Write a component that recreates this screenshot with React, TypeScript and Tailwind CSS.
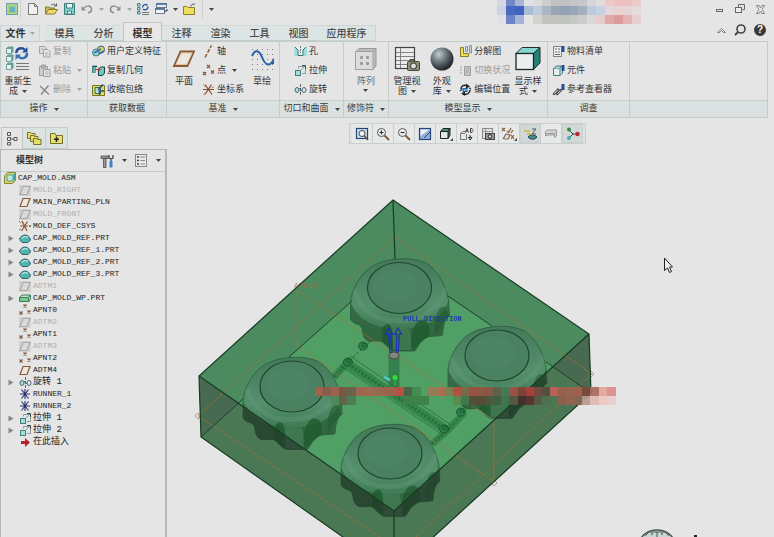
import React from "react";

type IconProps = { w?: number; h?: number; children: React.ReactNode };

function Ico({ w = 13, h = 13, children }: IconProps) {
  return (
    <svg width={w} height={h} viewBox={`0 0 ${w} ${h}`} fill="none" className="shrink-0" aria-hidden="true">
      {children}
    </svg>
  );
}

function Caret({ dim = false }: { dim?: boolean }) {
  return (
    <svg width="5" height="3" viewBox="0 0 5 3" className="shrink-0" aria-hidden="true">
      <path d="M0 0H5L2.5 3Z" fill={dim ? "#a5a5a5" : "#444"} />
    </svg>
  );
}

/* ---------- icons ---------- */

const AppIcon = () => (
  <Ico w={12} h={12}>
    <rect x=".5" y=".5" width="11" height="11" fill="#a9d3a0" stroke="#6aa3a8" />
    <rect x="2.5" y="2.5" width="7" height="7" fill="#8fcf9a" stroke="#b9c66a" />
    <rect x="4" y="4" width="5" height="5" fill="#62b4c4" />
  </Ico>
);
const AsmIcon = () => (
  <Ico w={12} h={12}>
    <path d="M.5 3.5L3.5 .5H11.5V8.5L8.5 11.5H.5Z" fill="#dcd65c" stroke="#8a8436" />
    <path d="M3 3H9V9H3Z" fill="#bfe6e2" stroke="#4a9c9a" />
    <path d="M9 3L11 1V8L9 9Z" fill="#4fa8a2" />
  </Ico>
);
const NewIcon = () => (
  <Ico w={10} h={12}>
    <path d="M.5 .5H6.5L9.5 3.5V11.5H.5Z" fill="#f0f0f0" stroke="#777" />
    <path d="M6.5 .5V3.5H9.5" stroke="#777" />
  </Ico>
);
const OpenIcon = () => (
  <Ico w={13} h={12}>
    <path d="M.5 11V4H4L5 5H9.5V7" fill="#c9b84a" stroke="#8a7a2a" />
    <path d="M.5 11L3.5 6.5H12.5L9.5 11Z" fill="#ecdc6c" stroke="#8a7a2a" />
    <path d="M6 2.5C8 .5 10 1 11 2.5M11.5 .5V3H9" stroke="#555" />
  </Ico>
);
const SaveIcon = () => (
  <Ico w={11} h={12}>
    <path d="M.5 .5H10.5V11.5H.5Z" fill="#7fcfcb" stroke="#3c7f80" />
    <path d="M2.5 .5H8.5V5H2.5Z" fill="#eef3f3" stroke="#3c7f80" />
    <path d="M3.5 8H7.5V11H3.5Z" fill="#eef3f3" stroke="#3c7f80" />
  </Ico>
);
const UndoIcon = ({ flip = false }: { flip?: boolean }) => (
  <Ico w={12} h={10}>
    <g transform={flip ? "matrix(-1 0 0 1 12 0)" : undefined}>
      <path d="M2 5C4 1.5 9.5 1 10.5 4.5C11 7 9 8.5 7 9" stroke="#8a8f94" strokeWidth="1.5" />
      <path d="M.5 2V6.5H5Z" fill="#8a8f94" />
    </g>
  </Ico>
);
const RegenIcon = () => (
  <Ico w={12} h={12}>
    <path d="M.5 .5H3V3H.5ZM.5 4.5H3V7H.5ZM.5 8.5H3V11H.5Z" fill="#bfe3df" stroke="#4a7f80" />
    <path d="M5.5 4.5C5.5 1.5 9 .5 10.5 2.5M11 3.5C11 7 7.5 7.5 6 6" stroke="#2f5fa8" strokeWidth="1.5" />
    <path d="M5 9.5H12M5 11.5H12" stroke="#777" />
  </Ico>
);
const WindowsIcon = () => (
  <Ico w={13} h={12}>
    <rect x="1.5" y=".5" width="10" height="4" fill="#e6e9f0" stroke="#6d7b92" />
    <rect x=".5" y="5.5" width="9" height="5" fill="#f0f2f6" stroke="#6d7b92" />
    <path d="M.5 6H9.5M1.5 1H11.5" stroke="#4a6c9c" strokeWidth="1.5" />
    <path d="M9 8H12V6" stroke="#333" />
  </Ico>
);
const FolderXIcon = () => (
  <Ico w={13} h={12}>
    <path d="M.5 11.5V3.5H4L5 4.5H11.5V11.5Z" fill="#ecdf62" stroke="#8d7f25" />
    <path d="M8 3.5C8 1.5 9 1 12 1" stroke="#555" />
  </Ico>
);

const BigRegen = () => (
  <Ico w={26} h={26}>
    {[1, 9, 17].map((y) => (
      <g key={y}>
        <path d={`M1.5 ${y + 1.5}L3 ${y}H8V${y + 5}L6.5 ${y + 6.5}`} fill="#54b3aa" stroke="#5f8f8c" strokeWidth=".8" />
        <path d={`M1.5 ${y + 1.5}H6.5V${y + 6.5}H1.5Z`} fill="#e6f2f0" stroke="#6f9f9c" />
      </g>
    ))}
    <path d="M11.5 7C11 2.5 17 .5 20 4" stroke="#284f94" strokeWidth="2.5" />
    <path d="M17 6.5H22.5V1Z" fill="#284f94" />
    <path d="M22 7C22.5 12 16.5 14 13.5 10.5" stroke="#3d70b8" strokeWidth="2.5" />
    <path d="M16 8.5H10.5V14Z" fill="#3d70b8" />
    <path d="M11 17.5H24M11 20.5H24M11 23.5H24" stroke="#777" />
  </Ico>
);
const CopyIcon = () => (
  <Ico>
    <path d="M1.5 1.5H6.5L8 3V8.5H1.5Z" fill="#ddd" stroke="#a3a3a3" />
    <path d="M5.5 4.5H10L12 6.5V12H5.5Z" fill="#e6e6e6" stroke="#a3a3a3" />
    <path d="M7 8H10.5M7 10H10.5M3 4H5" stroke="#b0b0b0" />
  </Ico>
);
const PasteIcon = () => (
  <Ico>
    <path d="M1.5 2.5H9.5V11.5H1.5Z" fill="#cfcfcf" stroke="#9d9d9d" />
    <path d="M3.5 1H7.5V4H3.5Z" fill="#b5b5b5" stroke="#9d9d9d" />
    <path d="M5.5 5.5H12V12.5H5.5Z" fill="#e6e6e6" stroke="#9d9d9d" />
    <path d="M7 8H10.5M7 10H10.5" stroke="#b0b0b0" />
  </Ico>
);
const DeleteIcon = () => (
  <Ico>
    <path d="M2 3L11 11.5M10.5 2.5L3 11.5" stroke="#8a8a8a" strokeWidth="1.5" />
  </Ico>
);
const UdfIcon = () => (
  <Ico>
    <circle cx="4" cy="7.5" r="3.5" fill="#9ed2d6" stroke="#3d7f86" />
    <circle cx="9" cy="4.5" r="3.5" fill="#e4d24c" stroke="#2d5f9c" />
    <path d="M2 8L9 4M7 9L12 6" stroke="#2f6fae" strokeWidth="1.5" />
  </Ico>
);
const CopyGeomIcon = () => (
  <Ico>
    <path d="M1 9V2.5H5" stroke="#1d4c4c" strokeWidth="1.5" />
    <path d="M1 3H4V9H1Z" fill="#54b8ae" />
    <path d="M6.5 5.5L8.5 3H12.5V9L10.5 11.5H6.5Z" fill="#6cc9bd" stroke="#1d3c4c" />
    <path d="M3 5.5H8M6 3.5L8 5.5L6 7.5" stroke="#a33" />
  </Ico>
);
const ShrinkIcon = () => (
  <Ico>
    <path d="M.5 2.5H12.5V12.5H.5Z" fill="#e3da55" stroke="#7c7320" />
    <path d="M3 4.5H8.5V10.5H3Z" fill="#bfe3c0" stroke="#24735a" />
    <path d="M6 7L11 1.5M7.5 12V8H12" stroke="#244c8c" strokeWidth="1.5" />
  </Ico>
);
const BigPlane = () => (
  <Ico w={26} h={26}>
    <path d="M9.5 5.5H23L16.5 20H3Z" stroke="#8a5a34" strokeWidth="1.8" />
    <path d="M10.5 7H21L15.5 18.5H5Z" fill="#ece8e0" stroke="#d3b48c" strokeWidth=".6" />
  </Ico>
);
const AxisIcon = () => (
  <Ico>
    <path d="M3 12.5L9.5 .5" stroke="#8a5a34" strokeWidth="1.5" strokeDasharray="4 1.5" />
  </Ico>
);
const PointsIcon = () => (
  <Ico>
    <path d="M5 1L8 4M8 1L5 4M1 8L4 11M4 8L1 11M9 6.5L12 9.5M12 6.5L9 9.5" stroke="#7a5238" strokeWidth="1.2" />
  </Ico>
);
const CsysIcon = () => (
  <Ico>
    <path d="M1 6.5H12M3 1.5L10 11.5M9.5 1.5L3 11.5" stroke="#8a4c28" strokeWidth="1.2" />
    <path d="M1 1.5L4 4M1 11.5L4 10M12 4L9 5" stroke="#b07850" strokeWidth=".8" />
  </Ico>
);
const BigSketch = () => (
  <Ico w={26} h={26}>
    {[3, 8, 13, 18, 23].map((y) =>
      [3, 8, 13, 18, 23].map((x) => <rect key={`${x}-${y}`} x={x} y={y} width="1" height="1" fill="#6f7f90" />),
    )}
    <path d="M3 10C6 3 10 4 13 11C16 19 20 21 24 15V18" stroke="#2a62ae" strokeWidth="2" />
  </Ico>
);
const HoleIcon = () => (
  <Ico>
    <path d="M0 2H13V11H0Z" fill="#a7dcd8" />
    <path d="M1 2L4 5V10.5H9V5L12 2" stroke="#387a7c" fill="#e7efee" />
    <path d="M6.5 1V8" stroke="#777" strokeDasharray="2 1" />
  </Ico>
);
const ExtrudeIcon = () => (
  <Ico>
    <rect x="1.5" y="6.5" width="5" height="5" fill="#a7dcd8" stroke="#3f7f7c" />
    <path d="M4.5 4.5V2.5H11.5V9.5H8M6.5 6.5L11 2" stroke="#8a9a9a" />
    <path d="M8 1.5H11.5V5" stroke="#364c4c" />
  </Ico>
);
const RevolveIcon = () => (
  <Ico>
    <path d="M6.5 1V12.5" stroke="#666" strokeDasharray="3 1" />
    <ellipse cx="3" cy="7" rx="2" ry="2.5" stroke="#3f6c78" fill="#b5dcd9" />
    <ellipse cx="10" cy="7" rx="2" ry="2.5" stroke="#3f6c78" />
    <path d="M5 5L8 8" stroke="#3f6c78" />
  </Ico>
);
const BigPattern = () => (
  <Ico w={26} h={26}>
    <path d="M3 6L6 2.5H23V20L20 23.5" fill="#bcbcbc" stroke="#9a9a9a" />
    <rect x="2.5" y="5.5" width="17.5" height="18" fill="#dcdcdc" stroke="#a0a0a0" />
    <path d="M20 5.5L23 2.5" stroke="#999" />
    {[[8, 11], [14, 11], [8, 17], [14, 17]].map(([x, y]) => (
      <rect key={`${x}-${y}`} x={x - 1} y={y - 1} width="3" height="3" rx="1" fill="#9a9a9a" />
    ))}
  </Ico>
);
const BigViewMgr = () => (
  <Ico w={26} h={26}>
    <rect x="1.5" y="1.5" width="19" height="21" fill="#ececec" stroke="#444" strokeWidth="1.2" />
    <path d="M2 6.5H20M2 10.5H20M2 14.5H20M2 18.5H20M6.5 2V22" stroke="#777" strokeWidth=".9" />
    <rect x="13.5" y="15.5" width="12" height="9" rx="1" fill="#8d8f74" stroke="#444" />
    <circle cx="19.5" cy="20" r="3" fill="#ddd" stroke="#333" />
    <path d="M16 15.5V13.5H20V15.5" fill="#77785f" stroke="#444" />
  </Ico>
);
const BigSphere = () => (
  <Ico w={26} h={26}>
    <defs>
      <radialGradient id="ball" cx=".36" cy=".3" r=".75">
        <stop offset="0" stopColor="#c3cdd3" />
        <stop offset=".35" stopColor="#7c878e" />
        <stop offset=".8" stopColor="#33393e" />
        <stop offset="1" stopColor="#1c2023" />
      </radialGradient>
    </defs>
    <circle cx="13" cy="13" r="11.5" fill="url(#ball)" />
  </Ico>
);
const ExplodeIcon = () => (
  <Ico>
    <path d="M1.5 2.5H4.5V8.5H9.5V11.5H1.5Z" fill="#ecdc5a" stroke="#8d7d22" />
    <path d="M6.5 1.5H8.5V6.5H6.5ZM10.5 .5H12.5V8H10.5Z" fill="#c7d7e0" stroke="#7a97aa" />
  </Ico>
);
const SwitchStateIcon = () => (
  <Ico>
    <path d="M5.5 2.5H11.5V11.5H5.5Z" fill="#c4c4c4" stroke="#a0a0a0" />
    <path d="M1 3H3M1 6H3M1 9H3M7 5H10M7 8H10" stroke="#a0a0a0" strokeWidth="1.2" />
  </Ico>
);
const EditPosIcon = () => (
  <Ico>
    <path d="M2 6C2 3 5 1 8 3M11 7C11 10 8 12 5 11" stroke="#222" strokeWidth="1.5" />
    <path d="M7 .5L11 3.5L7 5.5ZM6 8.5L2 10.5L6 13Z" fill="#222" />
    <rect x="4" y="5.5" width="4" height="3" fill="#6fb0dc" stroke="#2c5a88" />
    <path d="M1 8L3 6M10 5L12 6" stroke="#2c5a88" strokeWidth="1.5" />
  </Ico>
);
const BigCube = () => (
  <Ico w={26} h={26}>
    <path d="M1 7.5L7 1.5H25L18.5 7.5Z" fill="#86d6cd" stroke="#1d2f30" />
    <path d="M18.5 7.5L25 1.5V17L18.5 23.5Z" fill="#258078" stroke="#1d2f30" />
    <rect x="1" y="7.5" width="17.5" height="16" fill="#e9eeee" stroke="#1d2424" strokeWidth="1.3" />
  </Ico>
);
const BomIcon = () => (
  <Ico>
    <rect x="1.5" y="1.5" width="8" height="10" fill="#eee" stroke="#7c8790" />
    <path d="M3 4H5M6 4H8M3 7H5M6 7H8M3 9.5H8" stroke="#667" />
    <path d="M9.5 1H12.5V7H9.5Z" fill="#234f94" />
  </Ico>
);
const CompIcon = () => (
  <Ico>
    <path d="M1.5 4.5H8V11.5H1.5Z" fill="#e6efef" stroke="#3e7f86" />
    <path d="M1.5 4.5L4 2H9L8 4.5M8 11.5L10.5 9V6" fill="#b6dad8" stroke="#3e7f86" />
    <path d="M9.5 1H12.5V7H9.5Z" fill="#234f94" />
  </Ico>
);
const RefViewIcon = () => (
  <Ico>
    <path d="M2 11L6 6.5M5 11L9 7" stroke="#555" strokeWidth="2.5" strokeLinecap="round" />
    <path d="M2.5 10.5L5.5 7M5.5 10.5L8.5 7.5" stroke="#d6d6d6" />
    <path d="M9.5 1H12.5V7H9.5Z" fill="#234f94" />
  </Ico>
);

/* ---------- model tree icons ---------- */

const TPlane = ({ dim = false }: { dim?: boolean }) => (
  <Ico w={12} h={11}>
    {dim && <rect width="12" height="11" fill="#d2d2d0" />}
    <path d="M4 1.5H11L8 9.5H1Z" fill={dim ? "#dadad8" : "#ebe6de"} stroke={dim ? "#aaaaa6" : "#855a36"} strokeWidth="1.2" />
  </Ico>
);
const TCsys = () => (
  <Ico w={12} h={12}>
    <path d="M1 6H9M3 1L8 11M8.5 1.5L2.5 11" stroke="#8a5434" strokeWidth="1.2" />
    <path d="M10 5L12 7M12 5L10 7M0 1L2 3M0 10L2 9" stroke="#8a5434" strokeWidth=".8" />
  </Ico>
);
const TPart = () => (
  <Ico w={12} h={11}>
    <path d="M.5 6.500C1 4 3 2.5 6 2C9 2 11 4.5 11.5 7L9 9.5H3Z" fill="#53b3ae" stroke="#2f6668" />
    <path d="M3 5.5C4 3.5 7 3 9 4.5" stroke="#b4e4e0" strokeWidth="1.2" />
  </Ico>
);
const TWork = () => (
  <Ico w={12} h={11}>
    <path d="M.5 4.5L3 2H11.5L9.5 4.5ZM9.5 4.5L11.5 2V6L9.5 9Z" fill="#c0e6ca" stroke="#3f7f54" />
    <path d="M.5 4.5H9.5V8.500H.5Z" fill="#7cc894" stroke="#3f7f54" />
  </Ico>
);
const TPoint = () => (
  <Ico w={12} h={12}>
    <path d="M4.5 .5L7.5 3.5M7.5 .5L4.5 3.5M.5 7.5L3.5 10.5M3.5 7.5L.5 10.5M8.5 6.5L11.5 9.5M11.5 6.5L8.5 9.5" stroke="#84563a" strokeWidth="1.2" />
  </Ico>
);
const TRunner = () => (
  <Ico w={12} h={12}>
    <path d="M1 6H11M6 1V11M2.5 1.5L9.5 10.5M9.5 1.5L2.5 10.5" stroke="#2b3170" strokeWidth="1.1" />
  </Ico>
);
const TInsert = () => (
  <Ico w={12} h={11}>
    <path d="M2 4H6V1L11 5.5L6 10V7H2Z" fill="#b3242a" />
  </Ico>
);

type Node = { label: string; icon: React.ReactNode; dim?: boolean; exp?: boolean };
const NODES: Node[] = [
  { label: "MOLD_RIGHT", icon: <TPlane dim />, dim: true },
  { label: "MAIN_PARTING_PLN", icon: <TPlane /> },
  { label: "MOLD_FRONT", icon: <TPlane dim />, dim: true },
  { label: "MOLD_DEF_CSYS", icon: <TCsys /> },
  { label: "CAP_MOLD_REF.PRT", icon: <TPart />, exp: true },
  { label: "CAP_MOLD_REF_1.PRT", icon: <TPart />, exp: true },
  { label: "CAP_MOLD_REF_2.PRT", icon: <TPart />, exp: true },
  { label: "CAP_MOLD_REF_3.PRT", icon: <TPart />, exp: true },
  { label: "ADTM1", icon: <TPlane dim />, dim: true },
  { label: "CAP_MOLD_WP.PRT", icon: <TWork />, exp: true },
  { label: "APNT0", icon: <TPoint /> },
  { label: "ADTM2", icon: <TPlane dim />, dim: true },
  { label: "APNT1", icon: <TPoint /> },
  { label: "ADTM3", icon: <TPlane dim />, dim: true },
  { label: "APNT2", icon: <TPoint /> },
  { label: "ADTM4", icon: <TPlane /> },
  { label: "旋转 1", icon: <RevolveIcon />, exp: true },
  { label: "RUNNER_1", icon: <TRunner /> },
  { label: "RUNNER_2", icon: <TRunner /> },
  { label: "拉伸 1", icon: <ExtrudeIcon />, exp: true },
  { label: "拉伸 2", icon: <ExtrudeIcon />, exp: true },
  { label: "在此插入", icon: <TInsert /> },
];

/* ---------- ribbon parts ---------- */

function Big({ icon, lines, caret = false, dim = false }: { icon: React.ReactNode; lines: string[]; caret?: boolean; dim?: boolean }) {
  const last = lines.length - 1;
  return (
    <button type="button" className={`flex w-[34px] shrink-0 flex-col items-center pt-1 leading-[10px] ${dim ? "text-[#6c6c6c]" : "text-[#333]"}`}>
      {icon}
      <span className="mt-1 flex flex-col items-center whitespace-nowrap">
        {lines.map((l, i) => (
          <span key={l} className="flex items-center gap-1">
            {l}
            {caret && i === last && last > 0 && <Caret />}
          </span>
        ))}
        {caret && last === 0 && <span className="flex h-[9px] items-center"><Caret /></span>}
      </span>
    </button>
  );
}

function Small({ icon, label, caret = false, dim = false }: { icon: React.ReactNode; label: string; caret?: boolean; dim?: boolean }) {
  return (
    <button type="button" disabled={dim} className={`flex h-[19px] items-center gap-[2px] whitespace-nowrap ${dim ? "text-[#9c9c9c]" : "text-[#333]"}`}>
      {icon}
      {label}
      {caret && <span className="pl-1"><Caret dim={dim} /></span>}
    </button>
  );
}

function Group({ label, caret = false, className, children }: { label: string; caret?: boolean; className: string; children?: React.ReactNode }) {
  return (
    <section className={`flex flex-col border-r border-[#c8cece] ${className}`}>
      <div className="flex h-[58px]">{children}</div>
      <div className="flex h-[17px] items-center justify-center gap-[6px] whitespace-nowrap border-t border-[#c6cfcf] bg-[#dbe1e0] text-[#3a3a3a]">
        {label}
        {caret && <Caret />}
      </div>
    </section>
  );
}

const Col = ({ className = "", children }: { className?: string; children: React.ReactNode }) => (
  <div className={`flex flex-col items-start ${className}`}>{children}</div>
);

/* ---------- view toolbar ---------- */

const Lens = ({ sign }: { sign: string }) => (
  <Ico w={14} h={14}>
    <circle cx="5.5" cy="5.5" r="4" fill="#f0f2f2" stroke="#555" />
    <path d={sign} stroke="#333" strokeWidth="1.2" />
    <path d="M8.5 8.5L13 13" stroke="#7b5b3a" strokeWidth="2" />
  </Ico>
);
const VIEW_TOOLS: { name: string; on?: boolean; icon: React.ReactNode }[] = [
  { name: "重新调整", icon: <Ico w={14} h={14}><rect x="1.5" y="1.5" width="11" height="10" fill="#cfdcee" stroke="#24457c" strokeWidth="1.2" /><circle cx="7" cy="6.5" r="3" fill="#f2f4f6" stroke="#444" /><path d="M9 8.5L13 13" stroke="#6b4e34" strokeWidth="1.6" /></Ico> },
  { name: "放大", icon: <Lens sign="M3.5 5.5H7.5M5.5 3.5V7.5" /> },
  { name: "缩小", icon: <Lens sign="M3.5 5.5H7.5" /> },
  { name: "重画", icon: <Ico w={14} h={14}><rect x="1.5" y="1.5" width="11" height="11" fill="#8fb0da" stroke="#24457c" strokeWidth="1.2" /><path d="M2.5 2.500H11.5L2.5 9Z" fill="#eef2f6" /><path d="M6 11L12 5" stroke="#444" /></Ico> },
  { name: "显示样式", icon: <Ico w={14} h={14}><path d="M1.5 4.5L4 1.5H11L9 4.5ZM9 4.5L11 1.5V8.5L9 11.5Z" fill="#3f8f78" stroke="#222" /><path d="M1.5 4.5H9V11.5H1.5Z" fill="#dfeae6" stroke="#222" /><path d="M14 11V14H11Z" fill="#444" /></Ico> },
  { name: "已命名视图", icon: <Ico w={16} h={14}><path d="M1.5 6.5L3.5 4.5H7M1.5 6.5V12.5H7.5V7M1.5 6.5H6" stroke="#777" /><path d="M6.5 5.5L8 1.5L9.5 5.5M7 4H9M11.5 1.5H13L14 2.5L13 3.5L14 4.5L13 5.5H11.5Z" stroke="#333" strokeWidth=".9" /><path d="M11 8V10H12M9.5 10.5H13L11.2 13Z" stroke="#333" /></Ico> },
  { name: "视图管理器", icon: <Ico w={14} h={14}><rect x="1.5" y="1.5" width="10" height="10" fill="#e3e3e3" stroke="#888" /><path d="M2 4.5H11M4.5 2V11M5 7H11" stroke="#999" /><rect x="4.5" y="6.5" width="9" height="6" fill="#999" stroke="#444" /><circle cx="9" cy="9.5" r="1.8" fill="#ddd" stroke="#222" /></Ico> },
  { name: "基准显示过滤器", icon: <Ico w={16} h={14}><path d="M1 1L4 4M4 1L1 4M10 1L8 5M12 3L10 6M2 12L5 7M5 7L9 8L7 12H3M10 8L13 12M13 8L10 12M6 4L8 6" stroke="#86603e" strokeWidth="1.2" /><path d="M16 11V14H13Z" fill="#444" /></Ico> },
  { name: "注释显示", on: true, icon: <Ico w={14} h={14}><path d="M0 4H6M3 7H7" stroke="#c5b92a" strokeWidth="1.5" /><path d="M8 2H12L8 7H12" stroke="#555" /><path d="M4 10C6 7.5 11 7.5 13 10C11 13 6 13 4 10Z" fill="#4b8a8a" stroke="#244c54" /></Ico> },
  { name: "旋转中心", icon: <Ico w={14} h={14}><path d="M1.5 4.5L3.5 3H12.5V9L10.5 10.5V6.5H1.5ZM1.5 4.5V9L4 8H10" fill="#d3d3d3" stroke="#999" /></Ico> },
  { name: "动画", on: true, icon: <Ico w={14} h={14}><path d="M3 3L7 7H11M7 7L3 11" stroke="#444" /><circle cx="3" cy="2.5" r="2" fill="#2e8a3a" /><circle cx="3" cy="11" r="2" fill="#4aaeb4" /><circle cx="11.5" cy="7" r="2.2" fill="#b42c34" /></Ico> },
];

/* ---------- 3D scene ---------- */

const CAP_BODY =
  "M-49 14C-48 2 -40 -12 -30 -20C-14 -31 14 -32 28 -24C38 -17 46 -4 49 12L50 28C47 29 44 33 43 47C38 49 31 47 26 50C20 53 19 59 15 63H-6C-12 60 -13 57 -17 54C-22 51 -30 56 -34 51C-38 47 -36 41 -39 38C-42 35 -46 37 -49 31Z";
const CAP_SKIRT =
  "M-49 14C-42 32 -24 41 0 41C24 41 44 32 49 12L50 28C47 29 44 33 43 47C38 49 31 47 26 50C20 53 19 59 15 63H-6C-12 60 -13 57 -17 54C-22 51 -30 56 -34 51C-38 47 -36 41 -39 38C-42 35 -46 37 -49 31Z";

function Cap({ x, y }: { x: number; y: number }) {
  return (
    <g transform={`translate(${x} ${y})`}>
      <path d={CAP_BODY} fill="url(#capBody)" stroke="#285239" strokeWidth=".7" />
      <path d={CAP_SKIRT} fill="#2c6038" opacity=".7" />
      <path d="M-12 41L-8 62H13L10 41Z" fill="#4a8560" opacity=".55" />
      <path d="M-17 54C-20 42 -16 35 -11 36C-6 38 -7 50 -6 62Z" fill="#1f5a2e" opacity=".8" />
      <path d="M12 62C10 46 15 33 22 32C30 32 32 42 28 49Z" fill="#1f5a2e" opacity=".8" />
      <path d="M36 46C34 28 40 16 46 19L49 28Z" fill="#1f5a2e" opacity=".6" />
      <path d="M-45 2C-38 27 -18 34 2 33C24 32 41 20 46 0" stroke="#6a9f80" strokeWidth="5" opacity=".3" fill="none" />
      <ellipse rx="32" ry="25.5" fill="#4a8161" stroke="#204630" strokeWidth="1.2" />
      <ellipse cx="-4" cy="-3" rx="22" ry="16" fill="#50856a" opacity=".6" />
    </g>
  );
}

const RED_1 = ["#a8604a", "#8f5a48", "#a4604c", "#7a5446", "#69604a", "#a2624c", "#a8634c", "#a06850", "#a2644e", "#a65f4e", "#c14c40", "#4a5f40", "#3f8a50", "", "#9a7a56", "#b46a4e", "#7e7f52", "#bb5040", "#7e6a4c", "#a3503f", "#93553f", "#8f5444", "#5f6048", "#417a56", "#a34f44", "#80423a", "#b0403a", "#7c4a40", "#54503e", "#c46058", "#a0604c", "#9c6450", "#a8604c", "#7c4a3c", "#a96a5e", "#e4a49c", "#dc8c88"];
const RED_2 = ["", "", "#4c8a5a", "#63604a", "#4c7a52", "", "", "", "", "", "", "#3f7f4c", "#3c8048", "#3f8048", "", "", "", "#5a8a50", "#3f7a4c", "#564f38", "#5c4a38", "#4c5a3c", "#41603f", "#3f7650", "#5a5a44", "#4a2f2a", "#5a3530", "#5c5a44", "#4c7450", "#4c7852", "#90604c", "#9a6250", "#8a6650", "#b79a90", "#e0b8b4", "#ecc8c4", "#eccccc"];

function Scene() {
  return (
    <svg viewBox="167 144 607 393" className="block h-full w-full" role="img" aria-label="CAP_MOLD">
      <defs>
        <linearGradient id="capBody" x1="0" y1="0" x2="0" y2="1">
          <stop offset="0" stopColor="#437a59" />
          <stop offset=".5" stopColor="#55906d" />
          <stop offset=".75" stopColor="#3f7b56" />
          <stop offset="1" stopColor="#326a42" />
        </linearGradient>
      </defs>
      <path d="M393 200L589 334L591 393L394 573L201 437L199 376Z" fill="#4b8b5f" />
      <path d="M395 262L553 367L394 511L239 403Z" fill="#50a066" />
      <path d="M239 403L394 511L553 367L591 393L394 573L201 437Z" fill="#4a7754" />
      <path d="M199 376L239 403L201 437ZM589 334L553 367L591 393Z" fill="#486a52" />

      <g stroke="#2f8046" strokeWidth="9" opacity=".8">
        <path d="M345 362L448 431" />
        <path d="M334 377L349 361M432 444L449 429L464 413" strokeWidth="7" />
        <path d="M394 356V388" stroke="#2f7a48" strokeWidth="11" />
      </g>
      <path d="M345 362L448 431M334 377L349 361M432 444L449 429" stroke="#1e6432" strokeWidth="3" strokeDasharray="2 2" opacity=".7" />
      <path d="M349 361L376 336M449 429L466 410" stroke="#1e5c30" strokeDasharray="3 2" />
      <path d="M341 366L440 433M350 356L451 425" stroke="#1e6432" strokeWidth=".7" />
      {[[348, 362], [363, 346], [444, 429], [461, 412]].map(([x, y]) => (
        <g key={x} stroke="#174f29" strokeWidth=".8" fill="#2f8046">
          <ellipse cx={x} cy={y} rx="4.5" ry="4" />
          <ellipse cx={x + 1} cy={y - 1} rx="2" ry="2" />
        </g>
      ))}

      <Cap x={399.5} y={288} />
      <Cap x={497} y={355.5} />
      <Cap x={292} y={386.5} />
      <Cap x={390} y={453.5} />

      <clipPath id="frontWall">
        <path d="M199 376L394 511L589 334L591 393L394 573L201 437Z" />
      </clipPath>
      <g clipPath="url(#frontWall)" fill="#26352a" opacity=".6">
        <path d={CAP_BODY} transform="translate(292 386.5)" />
        <path d={CAP_BODY} transform="translate(390 453.5)" />
        <path d={CAP_BODY} transform="translate(497 355.5)" />
      </g>

      <g stroke="#a8703c" strokeWidth="1" opacity=".65" fill="none">
        <path d="M395 237L592 374L416 537M395 237L198 416L380 537" />
        <path d="M297 290V346L494 482V420L297 290" />
        <path d="M591 371L594 374L591 377L588 374ZM198 413L201 416L198 419L195 416ZM494 480L497 483L494 486L491 483Z" />
      </g>
      <text x="294" y="288" fontSize="8" fill="#b06a3c" fontFamily="Liberation Mono, monospace" opacity=".8">APNT2</text>

      <g stroke="#173c22" strokeWidth="1.2" fill="none">
        <path d="M393 200L589 334L591 393L394 573L201 437L199 376Z" />
        <path d="M199 376L394 511L589 334M394 511V537M393 200L395 259" />
        <path d="M352 301L289 357M243 399L201 437M448 296L492 326M546 362L591 393" strokeWidth=".9" />
      </g>

      <g stroke="#1c35b4" strokeWidth="1.3" fill="none">
        <path d="M390 353L388.5 334H385.500L389 328L392.5 334H390.5L392 353M396 353L397 334H394.5L398 328L401.5 334H399.5L398 353M390 353H398" />
      </g>
      <ellipse cx="394" cy="355.5" rx="5" ry="3.5" fill="#7a8a78" stroke="#5c3a3c" />
      <path d="M384 377L390 380" stroke="#4cd0d4" strokeWidth="2" />
      <circle cx="395" cy="377.5" r="2.5" fill="#2fe02f" />
      <path d="M395 379V386" stroke="#2fbf2f" />
      <text x="403" y="321" fontSize="7" fontWeight="700" fill="#1f3ab0" fontFamily="Liberation Mono, monospace">PULL DIRECTION</text>

      <g shapeRendering="crispEdges" opacity=".92">
        {RED_1.map((c, i) => c && <rect key={`a${i}`} x={315 + Math.round(i * 8.1)} y="387" width="9" height="9" fill={c} />)}
        {RED_2.map((c, i) => c && <rect key={`b${i}`} x={315 + Math.round(i * 8.1)} y="396" width="9" height="9" fill={c} />)}
      </g>

      <path d="M664.5 258V270.5L667.5 268L669.5 272.5L671.5 271.5L669.5 267H672.5Z" fill="#f2f2f2" stroke="#222" />

      <g>
        <ellipse cx="657" cy="543" rx="17" ry="13" fill="#c9d6d3" stroke="#4a5a58" strokeWidth="1.5" />
        <path d="M645 536L649 532H665L669 536M657 532V537" stroke="#4a5a58" fill="none" />
        <path d="M651 534H653M661 534H663" stroke="#33403f" />
        <rect x="694" y="535" width="3" height="2" fill="#222" />
      </g>
    </svg>
  );
}

const TITLE_BLOCKS = [
  ["#d3d8e2", "#7088c4", "#a9b4d0", "#e0e1e3", "#dcdcdc", "#cdcdcd", "#c2c2c4", "#c0c1c3", "#c4c5c7", "#c8c8ca", "#d6d6d6", "#e0dcdc", "#ecc8c8", "#eac0c0", "#ebc0c0", "#e8cccc"],
  ["#c9d3e4", "#4a68bc", "#3f64c0", "#a9bcd8", "#c0ccdc", "#aab6c4", "#98a6b6", "#94a2b4", "#98a6b8", "#a4b0be", "#bccadc", "#c6d2e2", "#e4d6d8", "#e8d2d2", "#e6d4d4", "#e6dada"],
  ["#dfe1e6", "#6c84c4", "#a4b4d8", "#e4e4e4", "#d2d2ce", "#c2c2be", "#c2c2be", "#c0c2c0", "#c6c8c6", "#cccccc", "#d8d8d8", "#e6cccc", "#e2a8a8", "#dc9c9c", "#e4b4b4", "#e6d0d0"],
];

const TABS = ["模具", "分析", "模型", "注释", "渲染", "工具", "视图"];
const slot = "flex w-[18px] items-center justify-center";
const caretSlot = "flex w-[10px] items-center justify-center";

export default function App() {
  return (
    <div className="flex h-screen min-h-[480px] flex-col overflow-hidden bg-[#e5e5e5] font-['Liberation_Sans','Noto_Sans_CJK_SC',sans-serif] text-[9px] text-[#333]">
      <header className="relative">
        <div className="flex h-[25px] items-start justify-between pr-[9px]">
          <div className="flex h-[18px] items-stretch pl-[3px]">
            <button type="button" aria-label="应用" className={`${slot} border-r border-[#cfcfcf]`}><AppIcon /></button>
            <button type="button" aria-label="新建" className={`${slot} ml-[3px]`}><NewIcon /></button>
            <button type="button" aria-label="打开" className={slot}><OpenIcon /></button>
            <button type="button" aria-label="保存" className={slot}><SaveIcon /></button>
            <button type="button" aria-label="撤消" className={slot}><UndoIcon /></button>
            <button type="button" aria-label="撤消列表" className={caretSlot}><Caret dim /></button>
            <button type="button" aria-label="重做" className={slot}><UndoIcon flip /></button>
            <button type="button" aria-label="重做列表" className={caretSlot}><Caret dim /></button>
            <button type="button" aria-label="重新生成" className={slot}><RegenIcon /></button>
            <button type="button" aria-label="窗口" className={slot}><WindowsIcon /></button>
            <button type="button" aria-label="窗口列表" className={caretSlot}><Caret /></button>
            <button type="button" aria-label="关闭" className={slot}><FolderXIcon /></button>
            <button type="button" aria-label="自定义" className="ml-1 flex w-[18px] items-center justify-center border-l border-[#cfcfcf]"><Caret /></button>
          </div>
          <div className="flex h-[18px] items-center gap-[11px]">
            <button type="button" aria-label="最小化"><Ico w={9} h={9}><rect x="1.5" y="4.5" width="6" height="2" fill="#eee" stroke="#666" /></Ico></button>
            <button type="button" aria-label="还原"><Ico w={10} h={10}><path d="M3.5 .5H9.5V5.5H7.5M3.5 .5V3" stroke="#666" /><rect x=".5" y="3.5" width="6" height="5" fill="#eee" stroke="#666" /></Ico></button>
            <button type="button" aria-label="关闭窗口"><Ico w={9} h={9}><path d="M.5 .5H3L4.5 3L6 .5H8.5L6 4.5L8.5 8.5H6L4.5 6L3 8.5H.5L3 4.5Z" fill="#eee" stroke="#777" strokeWidth=".9" /></Ico></button>
          </div>
        </div>
        <div className="absolute right-[133px] top-0 grid h-6 grid-cols-16 grid-rows-[6px_9px_9px]" aria-hidden="true">
          {TITLE_BLOCKS.flat().map((c, i) => (
            <span key={i} className="w-[9px]" style={{ backgroundColor: c }} />
          ))}
        </div>
      </header>

      <nav className="flex h-4 items-end justify-between pr-2">
        <div className="flex h-4 text-[10px]" role="tablist">
          <button type="button" className="mr-[5px] flex w-10 items-center justify-center gap-1 border border-b-0 border-[#cdd5d5] bg-[#dfe4e4] font-bold">
            文件<Caret dim />
          </button>
          {TABS.map((t) => (
            <button
              key={t}
              type="button"
              role="tab"
              aria-selected={t === "模型"}
              className={
                t === "模型"
                  ? "-mt-[3px] w-[39px] border border-b-0 border-[#bcc4c4] bg-[#e8e8e8] pt-[3px] font-bold"
                  : "w-[39px] border-y border-b-[#c4cccc] border-t-[#d2dada] bg-[#dde4e4] font-medium text-[#4a4a4a]"
              }
            >
              {t}
            </button>
          ))}
          <button type="button" role="tab" aria-selected={false} className="w-[58px] border border-l-0 border-[#cbd3d3] bg-[#dde4e4] font-medium text-[#4a4a4a]">
            应用程序
          </button>
        </div>
        <div className="flex h-[10px] items-center gap-2 self-start">
          <button type="button" aria-label="折叠功能区"><Ico w={9} h={7}><path d="M.5 5.5L4.5 1.5L8.5 5.5H6.5L4.5 3.5L2.5 5.5Z" fill="#eee" stroke="#666" strokeWidth=".8" /></Ico></button>
          <button type="button" aria-label="搜索"><Ico w={12} h={12}><circle cx="7" cy="5" r="4" stroke="#444" strokeWidth="1.6" /><path d="M4 8L1 11" stroke="#444" strokeWidth="2" /></Ico></button>
          <button type="button" aria-label="帮助" className="flex h-3 w-3 items-center justify-center rounded-full bg-[#3a3a3a] text-[10px] font-bold leading-none text-white">?</button>
        </div>
      </nav>

      <div className="mr-[6px] flex border border-[#c3cbcb]">
        <Group label="操作" caret className="w-[87px]">
          <Big icon={<BigRegen />} lines={["重新生", "成"]} caret />
          <Col className="pl-[3px]">
            <Small icon={<CopyIcon />} label="复制" dim />
            <Small icon={<PasteIcon />} label="粘贴" caret dim />
            <Small icon={<DeleteIcon />} label="删除" caret dim />
          </Col>
        </Group>
        <Group label="获取数据" className="w-[79px]">
          <Col className="pl-1">
            <Small icon={<UdfIcon />} label="用户定义特征" />
            <Small icon={<CopyGeomIcon />} label="复制几何" />
            <Small icon={<ShrinkIcon />} label="收缩包络" />
          </Col>
        </Group>
        <Group label="基准" caret className="w-[113px]">
          <Big icon={<BigPlane />} lines={["平面"]} />
          <Col className="grow pl-px">
            <Small icon={<AxisIcon />} label="轴" />
            <Small icon={<PointsIcon />} label="点" caret />
            <Small icon={<CsysIcon />} label="坐标系" />
          </Col>
          <Big icon={<BigSketch />} lines={["草绘"]} />
        </Group>
        <Group label="切口和曲面" caret className="w-16">
          <Col className="pl-[14px]">
            <Small icon={<HoleIcon />} label="孔" />
            <Small icon={<ExtrudeIcon />} label="拉伸" />
            <Small icon={<RevolveIcon />} label="旋转" />
          </Col>
        </Group>
        <Group label="修饰符" caret className="w-[45px]">
          <div className="flex grow justify-center"><Big icon={<BigPattern />} lines={["阵列"]} caret dim /></div>
        </Group>
        <Group label="模型显示" caret className="w-[159px]">
          <div className="flex grow justify-between pl-px pr-[2px]">
            <Big icon={<BigViewMgr />} lines={["管理视", "图"]} caret />
            <Big icon={<BigSphere />} lines={["外观", "库"]} caret />
            <Col>
              <Small icon={<ExplodeIcon />} label="分解图" />
              <Small icon={<SwitchStateIcon />} label="切换状况" dim />
              <Small icon={<EditPosIcon />} label="编辑位置" />
            </Col>
            <Big icon={<BigCube />} lines={["显示样", "式"]} caret />
          </div>
        </Group>
        <Group label="调查" className="w-[82px]">
          <Col className="pl-1">
            <Small icon={<BomIcon />} label="物料清单" />
            <Small icon={<CompIcon />} label="元件" />
            <Small icon={<RefViewIcon />} label="参考查看器" />
          </Col>
        </Group>
        <div className="flex flex-1 flex-col justify-end">
          <div className="h-[17px] border-t border-[#c6cfcf] bg-[#dbe1e0]" />
        </div>
      </div>

      <main className="flex min-h-0 flex-1">
        <aside className="flex w-[167px] shrink-0 flex-col pt-[9px]">
          <div className="flex h-[22px] pl-px" role="tablist">
            <button type="button" role="tab" aria-selected aria-label="模型树" className="flex w-[22px] items-center justify-center border border-b-0 border-[#bfc7c7]">
              <Ico w={12} h={15}>
                <path d="M1.5 1.5H4.5V4.5H1.5ZM1.5 6.5H4.5V9.5H1.5ZM1.5 11.5H4.5V14H1.5ZM8 6.5H11V9.5H8Z" fill="#eee" stroke="#555" />
                <path d="M5 8H8" stroke="#555" />
              </Ico>
            </button>
            <button type="button" role="tab" aria-selected={false} aria-label="文件夹浏览器" className="flex w-[22px] items-center justify-center border-y border-[#c4cccc] bg-[#dbe2e2]">
              <Ico w={15} h={15}>
                {[0, 3, 6].map((d) => (
                  <path key={d} d={`M${d + 0.5} ${d + 7.5}V${d + 1.5}H${d + 3.5}L${d + 4.5} ${d + 2.5}H${d + 8}V${d + 7.5}Z`} fill="#e3dd6a" stroke="#77702c" />
                ))}
              </Ico>
            </button>
            <button type="button" role="tab" aria-selected={false} aria-label="收藏夹" className="flex w-[23px] items-center justify-center border border-[#c4cccc] bg-[#dbe2e2]">
              <Ico w={13} h={12}>
                <path d="M.5 11.5V1.5H5L6 3.5H12.5V11.5Z" fill="#e6e06c" stroke="#77702c" />
                <path d="M6.5 4.5V10M4 7.2H9" stroke="#222" strokeWidth="1.5" />
              </Ico>
            </button>
          </div>
          <div className="flex min-h-0 flex-1 flex-col border-l border-r-2 border-t border-[#b4b8b8]">
            <div className="flex h-[22px] shrink-0 items-center border-b border-[#c2caca] pl-[15px] pr-1">
              <h2 className="grow text-[9px] font-bold">模型树</h2>
              <button type="button" aria-label="设置" className="flex items-center gap-2">
                <Ico w={14} h={14}>
                  <path d="M1 2H8V4.5H1ZM3.5 4.5H6V13.5H3.5Z" fill="#8f9a9c" stroke="#4c4c4c" strokeWidth=".8" />
                  <path d="M9 1V4L11 5L13 4V1M11 5V8" stroke="#444" strokeWidth="1.3" />
                  <path d="M9.5 7H12.5V13.5H9.5Z" fill="#3f84c8" />
                </Ico>
                <Caret />
              </button>
              <button type="button" aria-label="显示" className="ml-2 flex items-center gap-2">
                <Ico w={13} h={13}>
                  <rect x=".5" y=".5" width="11" height="12" fill="#e9e9e9" stroke="#888" />
                  <path d="M2 3H4M2 6.5H4M2 10H4" stroke="#444" strokeWidth="1.5" />
                  <path d="M5.5 3H10M5.5 6.5H10M5.5 10H10" stroke="#888" />
                </Ico>
                <Caret />
              </button>
            </div>
            <ul className="font-['Liberation_Mono','Noto_Sans_CJK_SC',monospace] text-[8px] leading-3 text-[#222]">
              <li className="flex h-3 items-center gap-[2px] pl-[3px]">
                <AsmIcon />CAP_MOLD.ASM
              </li>
              {NODES.map((n) => (
                <li key={n.label} className={`flex h-3 items-center whitespace-nowrap pl-[7px] ${n.dim ? "text-[#b0b0ae]" : ""}`}>
                  <span className="w-[11px]">
                    {n.exp && <Ico w={6} h={7}><path d="M.5 .5L5.5 3.5L.5 6.5Z" fill="#888" /></Ico>}
                  </span>
                  <span className="flex w-[14px] items-center">{n.icon}</span>
                  <span className={/[A-Z]/.test(n.label) ? "" : "text-[9px]"}>{n.label}</span>
                </li>
              ))}
            </ul>
          </div>
        </aside>

        <section className="flex min-w-0 flex-1 flex-col pt-[5px]">
          <div className="mr-[6px] flex h-[21px] items-stretch self-center border border-[#c9cfcf] bg-[#dde3e3] px-[2px]" role="toolbar">
            {VIEW_TOOLS.map((t) => (
              <button
                key={t.name}
                type="button"
                aria-label={t.name}
                className={`flex w-[21px] items-center justify-center border-r border-[#c9cfcf] ${t.on ? "border border-[#a3abab] bg-[#d2d8d8]" : "bg-[#e7e8e8]"}`}
              >
                {t.icon}
              </button>
            ))}
          </div>
          <div className="min-h-0 flex-1">
            <Scene />
          </div>
        </section>
      </main>
    </div>
  );
}
